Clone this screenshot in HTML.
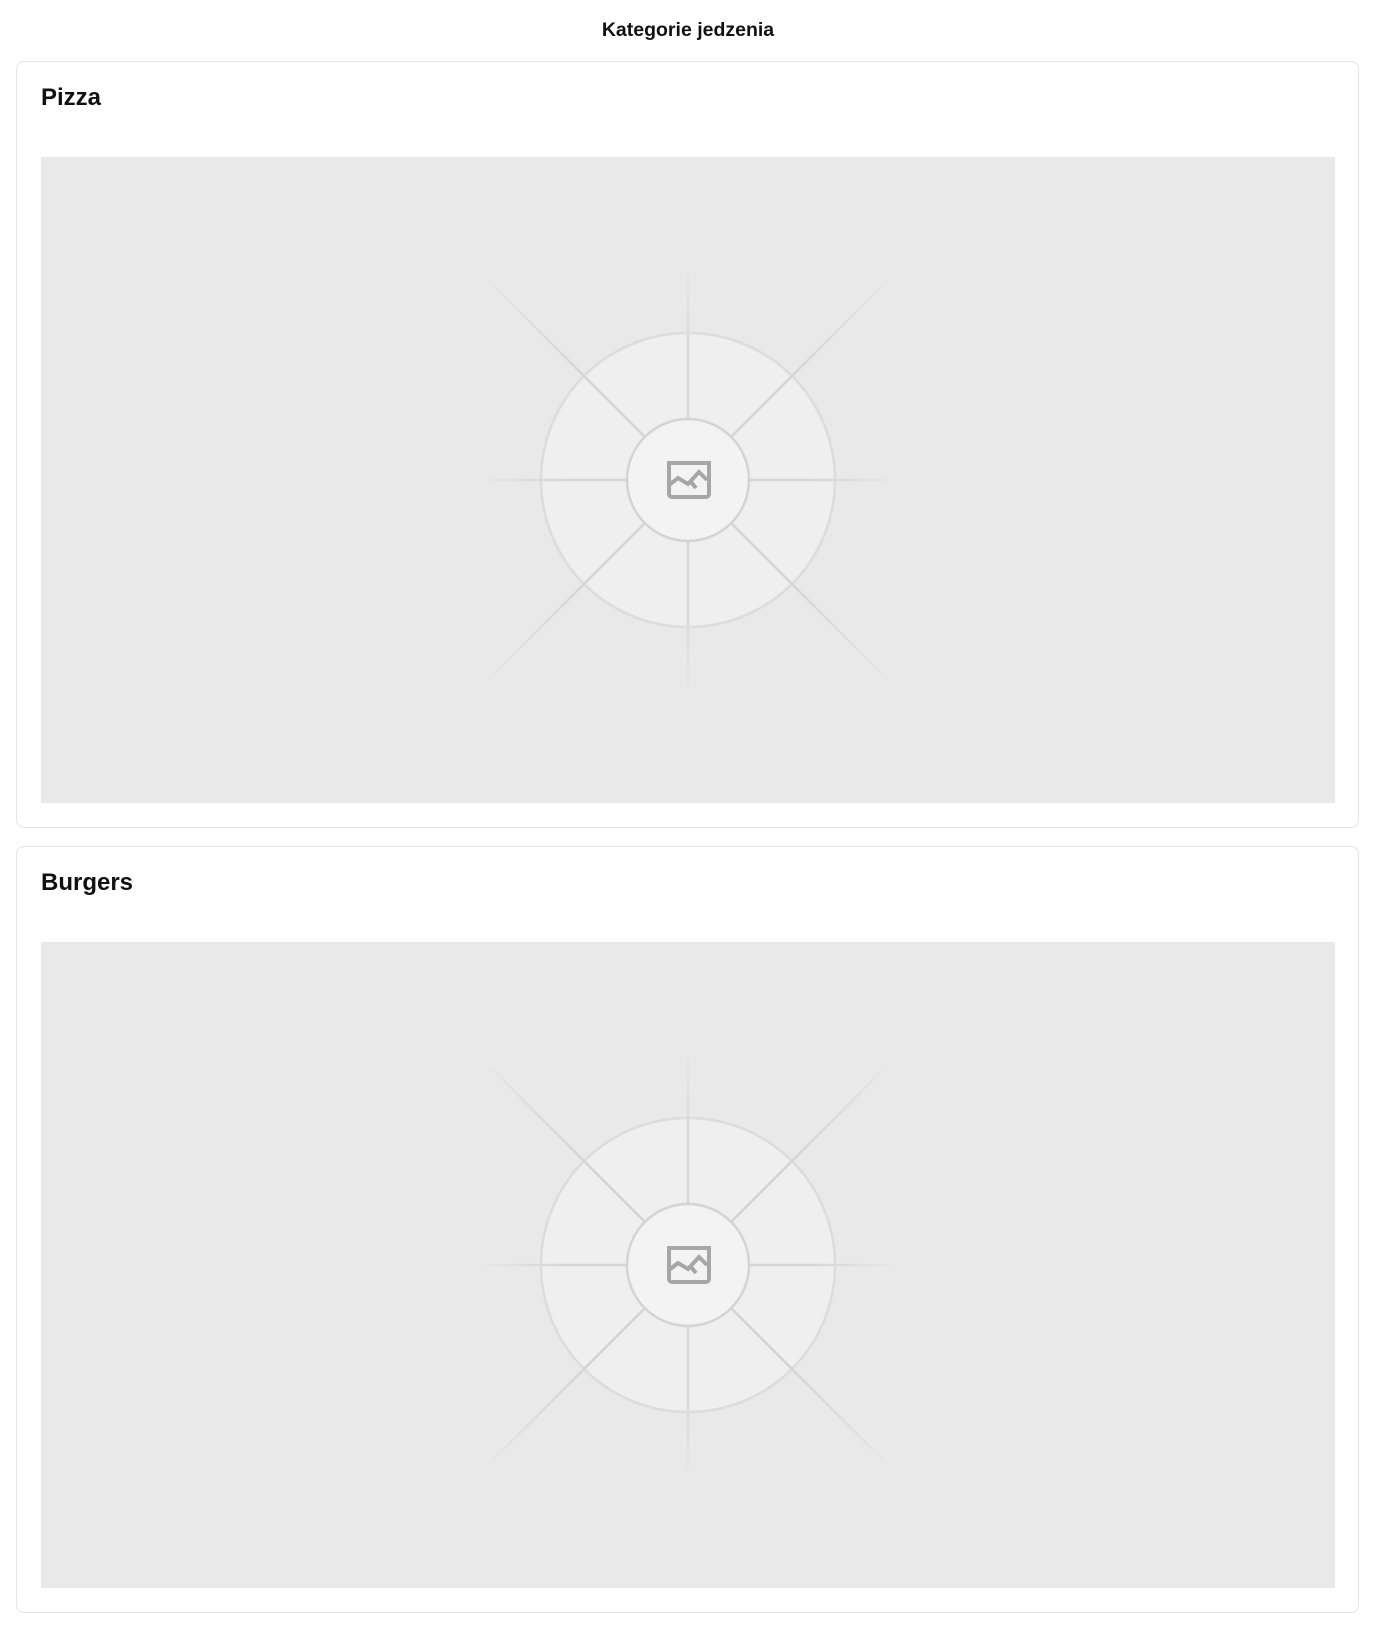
<!DOCTYPE html>
<html><head><meta charset="utf-8"><style>
body{margin:0;background:#fff;font-family:"Liberation Sans",sans-serif;color:#111;}
.h{position:absolute;left:0;width:1376px;top:19px;text-align:center;font-weight:bold;font-size:19.5px;}
.card{position:absolute;left:16px;width:1343px;height:767px;border:1px solid #e4e4e4;border-radius:8px;box-sizing:border-box;}
.t{position:absolute;left:24px;top:22px;font-weight:bold;font-size:24px;}
.img{position:absolute;left:24px;top:95px;width:1294px;height:646px;background:#e9e9e9;overflow:hidden;}
.img svg{position:absolute;left:0;top:0;}
</style></head><body>
<div class="h">Kategorie jedzenia</div>
<svg width="0" height="0" style="position:absolute"><defs>
<radialGradient id="fd" gradientUnits="userSpaceOnUse" cx="0" cy="0" r="285"><stop offset="0.5" stop-color="#d4d4d4"/><stop offset="1" stop-color="#e6e6e6"/></radialGradient>
<radialGradient id="fs" gradientUnits="userSpaceOnUse" cx="0" cy="0" r="210"><stop offset="0.6" stop-color="#d6d6d6"/><stop offset="1" stop-color="#e8e8e8"/></radialGradient>
</defs></svg>
<div class="card" style="top:61px"><div class="t">Pizza</div><div class="img">
<svg width="1294" height="646" viewBox="0 0 1294 646"><g transform="translate(647,323)" fill="none" stroke-width="2.5">
<circle r="147" fill="#efefef" stroke="#dcdcdc"/>
<g stroke="url(#fs)"><line x1="0" y1="-207" x2="0" y2="207"/><line x1="-205" y1="0" x2="205" y2="0"/></g>
<g stroke="url(#fd)"><line x1="-198" y1="-198" x2="198" y2="198"/><line x1="198" y1="-198" x2="-198" y2="198"/></g>
<circle r="61" fill="#f3f3f3" stroke="#d4d4d4"/>
<g stroke="#a6a6a6" stroke-width="4"><path d="M-19-17H21V14A3 3 0 0 1 18 17H-16A3 3 0 0 1-19 14Z"/><path d="M-19 5L-10-2L0 4L11-8L19 0M3 2L8 8"/></g>
</g></svg></div></div>
<div class="card" style="top:846px"><div class="t">Burgers</div><div class="img">
<svg width="1294" height="646" viewBox="0 0 1294 646"><g transform="translate(647,323)" fill="none" stroke-width="2.5">
<circle r="147" fill="#efefef" stroke="#dcdcdc"/>
<g stroke="url(#fs)"><line x1="0" y1="-207" x2="0" y2="207"/><line x1="-205" y1="0" x2="205" y2="0"/></g>
<g stroke="url(#fd)"><line x1="-198" y1="-198" x2="198" y2="198"/><line x1="198" y1="-198" x2="-198" y2="198"/></g>
<circle r="61" fill="#f3f3f3" stroke="#d4d4d4"/>
<g stroke="#a6a6a6" stroke-width="4"><path d="M-19-17H21V14A3 3 0 0 1 18 17H-16A3 3 0 0 1-19 14Z"/><path d="M-19 5L-10-2L0 4L11-8L19 0M3 2L8 8"/></g>
</g></svg></div></div>
</body></html>
